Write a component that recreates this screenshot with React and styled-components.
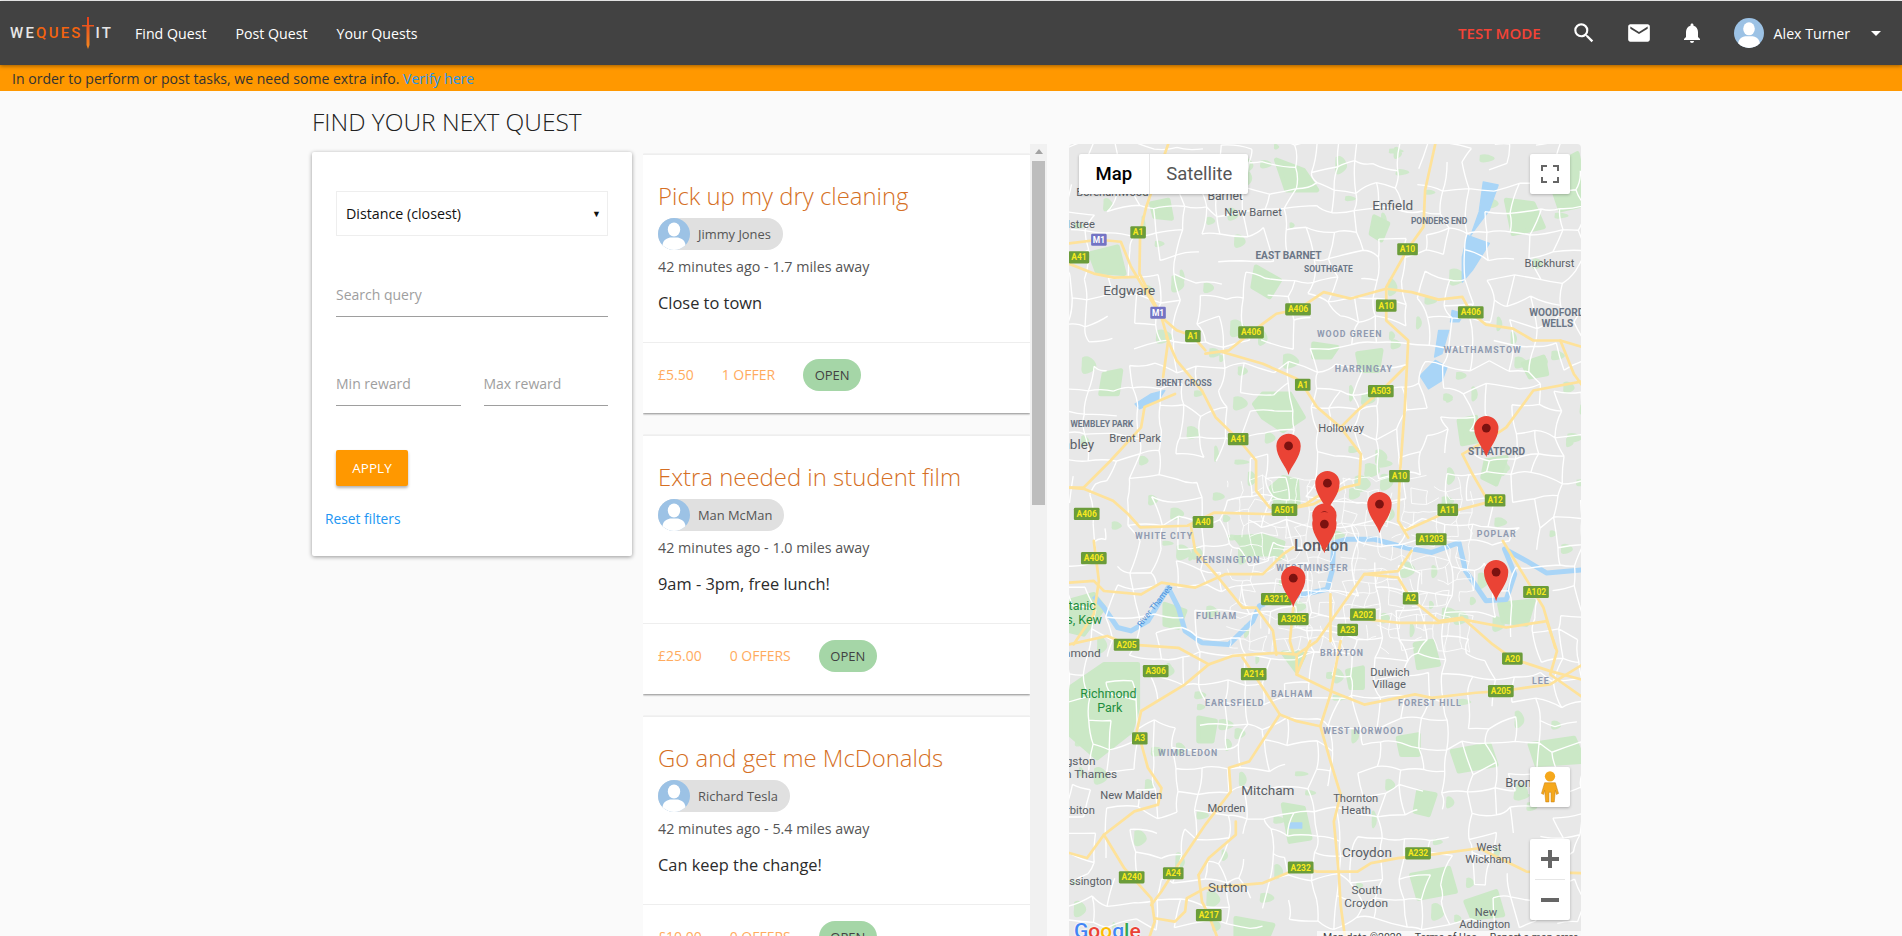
import React from 'react'
import styled, { createGlobalStyle } from 'styled-components'
import { MdSearch, MdEmail, MdNotifications, MdArrowDropDown } from 'react-icons/md'

const UI_FONT = `"Open Sans", "Noto Sans", sans-serif`

const GlobalStyle = createGlobalStyle`
  html, body {
    margin: 0;
    height: 936px;
    overflow: hidden;
    background: #fafafa;
    font-family: ${UI_FONT};
  }
  * { box-sizing: border-box; }
`

// quest data
const quests = [
  { id: 1, title: 'Pick up my dry cleaning', user: 'Jimmy Jones', dist: '1.7', text: 'Close to town', price: '£5.50', offers: '1 OFFER' },
  { id: 2, title: 'Extra needed in student film', user: 'Man McMan', dist: '1.0', text: '9am - 3pm, free lunch!', price: '£25.00', offers: '0 OFFERS' },
  { id: 3, title: 'Go and get me McDonalds', user: 'Richard Tesla', dist: '5.4', text: 'Can keep the change!', price: '£10.00', offers: '0 OFFERS' },
]

/* ---------- map data, in map sheet units (about 3 units = 1px) ---------- */

// sheet was measured a bit tall, squeeze y to line up
const sy = (y) => Math.round(y * 0.988)
const toPath = (pts) => 'M' + pts.map((p) => `${p[0]} ${sy(p[1])}`).join('L')

const majorRoads = [
  [[320,12],[255,200],[237,276],[235,400],[300,530],[345,570],[393,587],[430,630]],
  [[27,310],[115,299],[180,305],[210,380],[240,430],[300,530],[320,600],[305,710]],
  [[27,370],[100,400],[160,412],[230,410]],
  [[340,760],[250,800],[240,860],[150,960],[70,1040],[27,1040]],
  [[430,640],[500,630],[565,576],[640,520],[704,507],[780,455],[860,475],[965,445],[1040,455],[1120,478],[1190,470],[1215,516],[1260,553],[1340,565],[1400,600],[1480,600],[1563,625]],
  [[480,635],[600,670],[700,715],[718,733],[760,800],[830,860],[890,940],[885,1030],[840,1040],[750,1090],[664,1107],[620,1100],[580,1050],[580,960],[527,896],[460,830],[420,750],[345,660],[315,590]],
  [[1110,12],[1080,150],[1075,260],[1028,327],[965,440],[965,540],[1030,600],[1020,800],[1005,1006],[1000,1140],[1030,1190]],
  [[1020,680],[949,752],[880,810],[830,860]],
  [[1563,720],[1400,750],[1320,860],[1261,900],[1190,940],[1220,1000],[1260,1070],[1287,1079],[1130,1120],[1020,1170]],
  [[1480,600],[1520,700],[1563,760]],
  [[27,1040],[72,1045],[157,1080],[202,1120],[237,1160],[377,1155],[457,1115],[627,1120],[727,1090],[800,1040]],
  [[387,1155],[400,1230],[460,1300],[540,1400],[580,1400],[630,1470],[640,1540]],
  [[27,1325],[100,1320],[130,1350],[240,1360],[300,1325],[400,1340],[490,1300],[600,1300],[660,1240],[690,1220]],
  [[100,1200],[115,1320],[100,1420],[40,1510]],
  [[27,1510],[140,1485],[200,1510],[350,1520],[440,1570],[510,1545],[640,1535],[700,1540],[760,1500],[830,1400],[900,1300],[1000,1290],[1040,1230]],
  [[440,1570],[370,1630],[240,1710],[225,1780],[236,1792],[260,1880],[300,1940],[290,1990],[220,2010],[130,2080],[80,2150],[27,2135]],
  [[130,2080],[190,2180],[270,2270],[280,2340],[260,2400]],
  [[540,1550],[600,1640],[650,1720],[700,1740],[770,1755],[800,1860],[830,1960],[810,2040],[825,2200],[830,2290],[845,2400]],
  [[650,1720],[560,1860],[500,1880],[505,1950],[430,2050],[350,2170],[300,2250],[270,2290]],
  [[830,1500],[800,1660],[770,1755]],
  [[700,1600],[800,1650],[900,1690],[1050,1660],[1100,1670],[1230,1655],[1304,1650],[1450,1630],[1563,1560]],
  [[900,1300],[1000,1310],[1037,1372],[1120,1440],[1190,1430],[1280,1510],[1338,1553],[1450,1590],[1563,1620]],
  [[860,1430],[1000,1445],[1120,1445],[1190,1435],[1320,1460],[1440,1440],[1470,1530],[1450,1600],[1563,1680]],
  [[1310,1200],[1370,1300],[1430,1400],[1465,1520]],
  [[1563,2195],[1380,2190],[1240,2120],[1100,2140],[1000,2150],[920,2165],[880,2190],[760,2190],[712,2178],[600,2225],[430,2240],[375,2270],[370,2310],[340,2340],[280,2330]],
  [[410,2200],[420,2280],[440,2321],[470,2400]],
  [[520,2040],[520,2080],[440,2150],[410,2200]],
  [[690,1400],[680,1500],[690,1535]],
  [[800,1360],[800,1500]],
  [[700,1540],[700,1600],[740,1500]],
]

const parks = [
  [[625,1040],[660,1010],[700,1020],[705,1090],[640,1095]],
  [[600,760],[680,760],[720,830],[660,870],[600,830],[575,790]],
  [[30,1640],[130,1570],[230,1570],[230,1700],[210,1770],[110,1850],[30,1780]],
  [[30,1380],[100,1360],[130,1400],[70,1480],[30,1470]],
  [[520,1190],[600,1185],[660,1205],[650,1240],[560,1240]],
  [[660,1535],[725,1535],[700,1590]],
  [[310,1390],[370,1410],[350,1460],[310,1450]],
  [[90,340],[170,320],[190,400],[110,395]],
  [[270,190],[320,180],[330,235],[280,230]],
  [[130,700],[180,690],[170,760],[120,760]],
  [[640,60],[720,90],[760,150],[670,150]],
  [[580,380],[650,420],[620,470],[570,440]],
  [[930,230],[970,250],[950,300],[920,280]],
  [[1320,180],[1400,190],[1430,260],[1340,280]],
  [[1440,90],[1530,40],[1563,190],[1480,210]],
  [[1180,840],[1230,830],[1240,900],[1190,910]],
  [[1260,960],[1320,950],[1290,1030],[1250,1010]],
  [[1300,1390],[1400,1380],[1380,1450],[1310,1440]],
  [[1050,1510],[1100,1500],[1120,1570],[1060,1580]],
  [[850,1590],[895,1580],[895,1640],[860,1640]],
  [[1000,1790],[1060,1780],[1060,1840],[1010,1840]],
  [[1160,1830],[1270,1810],[1290,1870],[1180,1890]],
  [[1060,1950],[1110,1960],[1090,2020],[1050,2010]],
  [[660,1990],[720,2000],[740,2090],[680,2100]],
  [[1040,2200],[1150,2180],[1170,2250],[1060,2270]],
  [[1390,1810],[1520,1790],[1550,1860],[1410,1870]],
  [[1200,2280],[1290,2250],[1310,2320],[1220,2330]],
  [[520,2330],[630,2350],[610,2400],[520,2400]],
  [[410,1730],[460,1740],[450,1800],[410,1800]],
  [[880,640],[950,630],[940,690],[890,690]],
  [[750,610],[820,620],[800,650],[750,650]],
  [[1370,670],[1430,650],[1440,700],[1390,710]],
]

const waters = [
  [[1252,125],[1296,135],[1270,210],[1225,270],[1215,285],[1240,215]],
  [[1205,285],[1270,310],[1220,390],[1190,425],[1190,350]],
  [[1120,570],[1150,570],[1130,640],[1108,650]],
  [[1110,660],[1145,680],[1130,720],[1090,745],[1065,705]],
  [[222,790],[270,760],[310,750],[290,780],[235,805]],
  [[1160,510],[1195,520],[1180,545],[1155,545]],
  [[680,2045],[715,2045],[715,2060],[680,2060]],
]

const thames = [[100,1365],[130,1400],[170,1460],[210,1470],[260,1440],[320,1340],[350,1400],[370,1470],[420,1505],[500,1510],[570,1440],[590,1395],[640,1375],[700,1365],[790,1345],[805,1290],[810,1205],[850,1195],[930,1195],[1020,1220],[1100,1235],[1180,1205],[1200,1290],[1260,1380],[1320,1375],[1345,1300],[1315,1225],[1380,1260],[1440,1297],[1563,1285]]

const towns = [
  ['Borehamwood', 48, 168, 33], ['Barnet', 436, 178, 36], ['New Barnet', 486, 228, 33], ['Enfield', 924, 210, 40],
  ['Elstree', 3, 264, 33], ['Buckhurst', 1374, 382, 33], ['Edgware', 128, 464, 40], ['Brent Park', 146, 905, 33],
  ['Wembley', -62, 924, 40], ['Holloway', 764, 876, 33], ['Dulwich', 918, 1605, 33], ['Village', 924, 1641, 33],
  ['New Malden', 119, 1974, 33], ['Mitcham', 536, 1961, 40], ['Morden', 436, 2013, 33], ['Thornton', 808, 1982, 33],
  ['Heath', 832, 2018, 33], ['Bromley', 1317, 1936, 38], ['Croydon', 834, 2148, 40], ['West', 1232, 2130, 33],
  ['Wickham', 1199, 2166, 33], ['Sutton', 438, 2250, 40], ['South', 862, 2258, 35], ['Croydon', 841, 2296, 35],
  ['New', 1227, 2322, 33], ['Addington', 1181, 2358, 33], ['Richmond', -37, 1547, 35], ['Kingston', -33, 1871, 35],
  ['upon Thames', -44, 1911, 35], ['Surbiton', -20, 2018, 33], ['Chessington', -30, 2232, 33],
]

const suburbs = [
  ['PONDERS END', 1038, 252, 25], ['EAST BARNET', 578, 356, 30], ['SOUTHGATE', 722, 396, 25], ['WOODFORD', 1388, 527, 30],
  ['WELLS', 1424, 560, 30], ['BRENT CROSS', 284, 738, 25], ['WEMBLEY PARK', 31, 860, 25], ['STRATFORD', 1207, 942, 30],
]

const districts = [
  ['WOOD GREEN', 760, 590], ['WALTHAMSTOW', 1135, 638], ['HARRINGAY', 813, 695], ['WHITE CITY', 222, 1195], ['POPLAR', 1233, 1188],
  ['KENSINGTON', 402, 1267], ['WESTMINSTER', 640, 1291], ['FULHAM', 402, 1433], ['BRIXTON', 769, 1545], ['LEE', 1396, 1629],
  ['BALHAM', 624, 1667], ['EARLSFIELD', 429, 1695], ['FOREST HILL', 1000, 1695], ['WEST NORWOOD', 778, 1779], ['WIMBLEDON', 290, 1845],
]

const greenLabels = [
  ['Royal Botanic', -118, 1407], ['Gardens, Kew', -100, 1449], ['Richmond', 60, 1670], ['Park', 110, 1712],
]

const shields = [
  ['A1',231,276],['M1',115,299],['A41',56,351],['A10',1028,327],['M1',290,517],['A406',704,507],['A10',965,496],['A406',1215,516],
  ['A406',565,576],['A1',393,587],['A1',718,733],['A503',949,752],['A41',527,896],['A10',1004,1006],['A501',664,1107],['A11',1147,1107],
  ['A12',1287,1079],['A406',79,1119],['A40',423,1144],['A1203',1098,1195],['A406',100,1252],['A3212',640,1374],['A3205',690,1434],
  ['A2',1037,1372],['A102',1408,1353],['A202',896,1421],['A23',851,1467],['A205',197,1511],['A306',283,1590],['A214',573,1599],
  ['A20',1338,1553],['A205',1304,1650],['A3',236,1792],['A232',1059,2136],['A232',712,2178],['A24',335,2195],['A240',212,2207],['A217',440,2321],
]

const pins = [[676,916],[791,1027],[782,1124],[782,1150],[945,1090],[1261,862],[690,1312],[1290,1294]]

// little seeded random so the street mesh stays the same on every load
const seeded = (seed) => () => {
  seed = (seed * 1664525 + 1013904223) % 4294967296
  return seed / 4294967296
}

const buildMesh = (step, x0, y0, x1, y1, chance, seed) => {
  const rnd = seeded(seed)
  const nodes = []
  for (let y = y0; y <= y1; y += step) {
    const row = []
    for (let x = x0; x <= x1; x += step) {
      row.push([Math.round(x + (rnd() - 0.5) * step * 0.6), Math.round(y + (rnd() - 0.5) * step * 0.6)])
    }
    nodes.push(row)
  }
  const link = (a, b) => {
    const bend = step * 0.3
    const mx = Math.round((a[0] + b[0]) / 2 + (rnd() - 0.5) * bend)
    const my = Math.round((a[1] + b[1]) / 2 + (rnd() - 0.5) * bend)
    return `M${a[0]} ${a[1]}Q${mx} ${my} ${b[0]} ${b[1]}`
  }
  let d = ''
  nodes.forEach((row, r) => row.forEach((n, c) => {
    if (row[c + 1] && rnd() < chance) d += link(n, row[c + 1])
    if (nodes[r + 1] && rnd() < chance) d += link(n, nodes[r + 1][c])
  }))
  return d
}

const wideStreets = buildMesh(66, 20, 10, 1560, 2370, 0.66, 41)
const cityStreets = buildMesh(34, 500, 1000, 1220, 1540, 0.6, 7)

const patches = (() => {
  const rnd = seeded(99)
  return Array.from({ length: 170 }, () => {
    const x = 27 + rnd() * 1514
    const y = 12 + rnd() * 2343
    const w = 10 + rnd() * 30
    const h = 10 + rnd() * 26
    return `M${Math.round(x)} ${Math.round(y)}q${Math.round(w / 2)} ${Math.round(-h / 3)} ${Math.round(w)} ${Math.round(h / 4)}t${Math.round(-w / 3)} ${Math.round(h)}t${Math.round(-w * 0.7)} ${Math.round(-h / 2)}Z`
  }).join('')
})()

/* ---------- layout ---------- */

const Page = styled.div`
  height: 936px;
  overflow: hidden;
  padding-top: 1px;
  background: #fafafa;
`
const Nav = styled.nav`
  position: relative;
  z-index: 2;
  height: 64px;
  background: #424242;
  box-shadow: 0 1px 4px rgba(0, 0, 0, 0.4);
  display: flex;
  align-items: center;
  padding: 0 14px 0 10px;
  color: #fff;
  font-size: 14.2px;
`
const Logo = styled.div`
  width: 125px;
  display: flex;
  align-items: center;
  font-family: Roboto, sans-serif;
  font-weight: 500;
  font-size: 15px;
  letter-spacing: 2.2px;
  color: #e6e6e6;
  svg { margin: 0 2px 0 -1px; }
`
const LogoMark = styled.span`
  color: #f4640f;
`
const NavLink = styled.a`
  color: #fff;
  margin-right: 29px;
`
const Spacer = styled.div`
  flex: 1;
`
const TestMode = styled.span`
  color: #f44336;
  font-weight: 600;
  font-size: 15px;
  margin-right: 30px;
`
const NavIcon = styled.span`
  display: flex;
  margin-right: ${(p) => p.$gap}px;
  font-size: ${(p) => p.$size}px;
`
const UserName = styled.span`
  margin: 0 14px 0 10px;
`
const Banner = styled.div`
  height: 26px;
  background: #ff9800;
  padding-left: 12px;
  font-size: 14.05px;
  line-height: 27px;
  color: #333;
  a { color: #2196f3; }
`
const Content = styled.main`
  padding: 0 321px 0 312px;
`
const Heading = styled.h1`
  margin: 0;
  height: 53px;
  padding-top: 14px;
  font-size: 24.5px;
  line-height: 34px;
  font-weight: 300;
  color: #212121;
`
const Columns = styled.div`
  display: grid;
  grid-template-columns: 320px 404px 512px;
  column-gap: 11px;
  height: 792px;
  & > :last-child { margin-left: 11px; }
`

/* ---------- filter card ---------- */

const FilterCard = styled.section`
  align-self: start;
  height: 404px;
  margin-top: 8px;
  padding: 39px 24px 0;
  background: #fff;
  border-radius: 2px;
  box-shadow: 0 1px 4px rgba(0, 0, 0, 0.4);
`
const SelectBox = styled.div`
  height: 45px;
  border: 1px solid #eeeeee;
  display: flex;
  align-items: center;
  justify-content: space-between;
  padding: 0 6px 0 9px;
  font-size: 14.25px;
  color: #111;
  i { font-style: normal; font-size: 9px; }
`
const Field = styled.div`
  flex: 1;
  height: 44px;
  margin-top: ${(p) => p.$top}px;
  border-bottom: 1px solid #9e9e9e;
  font-size: 14px;
  line-height: 44px;
  color: #9e9e9e;
`
const FieldRow = styled.div`
  display: flex;
  gap: 23px;
`
const ApplyButton = styled.button`
  display: block;
  width: 72px;
  height: 36px;
  margin-top: 44px;
  border: 0;
  border-radius: 2px;
  background: #ff9800;
  color: #fff;
  font-family: inherit;
  font-size: 13.5px;
  box-shadow: 0 2px 3px rgba(0, 0, 0, 0.3);
`
const ResetLink = styled.a`
  display: block;
  margin: 23px 0 0 -11px;
  font-size: 13.8px;
  color: #2196f3;
`

/* ---------- quest list ---------- */

const ListArea = styled.section`
  display: flex;
  height: 792px;
  overflow: hidden;
`
const Cards = styled.div`
  flex: 1;
  padding-top: 10px;
  min-width: 0;
`
const Card = styled.article`
  height: 259px;
  margin-bottom: 22px;
  background: #fff;
  border-top: 1px solid #eeeeee;
  box-shadow: 0 1px 2px rgba(0, 0, 0, 0.45);
`
const CardBody = styled.div`
  height: 187px;
  padding: 24px 15px 0;
`
const CardTitle = styled.h2`
  margin: 0;
  height: 39px;
  font-size: 23.9px;
  line-height: 34px;
  font-weight: 300;
  color: #d56f24;
`
const UserChip = styled.div`
  display: inline-flex;
  align-items: center;
  height: 32px;
  background: #e0e0e0;
  border-radius: 16px;
  padding-right: 12px;
  font-size: 12.9px;
  font-weight: 500;
  color: #555;
  span { margin-left: 8px; }
`
const Meta = styled.div`
  margin-top: 1px;
  font-size: 14.3px;
  line-height: 22px;
  color: #555;
`
const Desc = styled.div`
  margin-top: 14px;
  font-size: 16.4px;
  line-height: 22px;
  color: #2b2b2b;
`
const CardFoot = styled.div`
  height: 71px;
  border-top: 1px solid #eeeeee;
  padding: 16px 15px 0;
  display: flex;
  align-items: flex-start;
  font-size: 14px;
  line-height: 32px;
  color: #ffab5e;
`
const FootItem = styled.span`
  margin-right: 28px;
`
const StatusChip = styled.span`
  width: 58px;
  height: 32px;
  border-radius: 16px;
  background: #a5d6a7;
  text-align: center;
  font-size: 13px;
  color: #424242;
`
const ScrollTrack = styled.div`
  width: 17px;
  flex: none;
  background: #f1f1f1;
  padding: 5px 2px 0;
  &::before {
    content: '';
    display: block;
    width: 0;
    margin: 0 auto 7px;
    border: 4px solid transparent;
    border-top: 0;
    border-bottom: 5px solid #a3a3a3;
  }
`
const ScrollThumb = styled.div`
  height: 344px;
  background: #bdbdbd;
`

/* ---------- map ---------- */

const MapWrap = styled.section`
  position: relative;
  width: 512px;
  height: 792px;
  overflow: hidden;
  border-radius: 4px 4px 0 0;
  background: #e8e8e8;
  font-family: Roboto, sans-serif;
  & > svg { display: block; }
`
const TownText = styled.text`
  font-family: Roboto, sans-serif;
  fill: #5a5f66;
`
const SuburbText = styled.text`
  font-family: Roboto, sans-serif;
  font-weight: 700;
  fill: #6b7686;
`
const DistrictText = styled.text`
  font-family: Roboto, sans-serif;
  font-weight: 700;
  font-size: 26px;
  letter-spacing: 3px;
  fill: #8f9ab0;
`
const ParkText = styled.text`
  font-family: Roboto, sans-serif;
  font-size: 37px;
  fill: #1e8e3e;
`
const RiverText = styled.text`
  font-family: Roboto, sans-serif;
  font-size: 25px;
  fill: #4a8fd8;
`
const ShieldText = styled.text`
  font-family: Roboto, sans-serif;
  font-size: 25px;
  font-weight: 700;
  text-anchor: middle;
  fill: ${(p) => (p.$motorway ? '#fff' : '#f7e91f')};
`
const MapControl = styled.div`
  position: absolute;
  left: ${(p) => p.$left}px;
  top: ${(p) => p.$top}px;
  width: ${(p) => p.$width || 40}px;
  height: ${(p) => p.$height || 40}px;
  background: #fff;
  border-radius: 2px;
  box-shadow: 0 1px 3px rgba(0, 0, 0, 0.25);
  display: flex;
  align-items: center;
  justify-content: center;
`
const MapTab = styled.div`
  height: 40px;
  line-height: 40px;
  padding: 0 ${(p) => (p.$active ? 17 : 16)}px;
  font-size: 18.5px;
  color: ${(p) => (p.$active ? '#000' : '#565656')};
  font-weight: ${(p) => (p.$active ? 500 : 400)};
  & + & { border-left: 1px solid #e6e6e6; }
`
const ZoomStack = styled.div`
  display: flex;
  flex-direction: column;
  align-items: center;
  hr {
    width: 30px;
    margin: 0;
    border: 0;
    border-top: 1px solid #e6e6e6;
  }
`
const GoogleMark = styled.div`
  position: absolute;
  left: 5px;
  top: 775px;
  font-family: Roboto, sans-serif;
  font-size: 21px;
  font-weight: 500;
  line-height: 24px;
  text-shadow: 0 0 2px #fff, 0 0 2px #fff;
`
const GoogleLetter = styled.span`
  color: ${(p) => p.$color};
`
const Attribution = styled.div`
  position: absolute;
  right: 0;
  top: 787px;
  width: 264px;
  height: 20px;
  padding-left: 6px;
  white-space: nowrap;
  overflow: hidden;
  background: rgba(255, 255, 255, 0.7);
  font-size: 10.5px;
  line-height: 14px;
  color: #444;
  span { margin-right: 13px; }
`

const Avatar = ({ size }) => (
  <svg width={size} height={size} viewBox="0 0 32 32" style={{ flex: 'none' }}>
    <defs>
      <clipPath id="avatar-clip"><circle cx="16" cy="16" r="16" /></clipPath>
    </defs>
    <g clipPath="url(#avatar-clip)">
      <rect width="32" height="32" fill="#9cc2e5" />
      <ellipse cx="16" cy="11.500" rx="6.200" ry="7" fill="#fff" />
      <path d="M4 32c0-8 2-11 8-12.500h8c6 1.500 8 4.500 8 12.500z" fill="#fff" />
    </g>
  </svg>
)

const SwordLogo = () => (
  <svg width="12" height="32" viewBox="0 0 12 32">
    <defs>
      <linearGradient id="blade" x1="0" y1="0" x2="0" y2="1">
        <stop offset="0" stopColor="#e8401c" />
        <stop offset="1" stopColor="#f58a1f" />
      </linearGradient>
    </defs>
    <path d="M5 0h2v8h5v1.500H7.500V28L6 32l-1.500-4V9.500H0V8h5z" fill="url(#blade)" />
  </svg>
)

const CityMap = () => (
  <svg width="512" height="792" viewBox="26.600 11.800 1514.500 2342.700">
    <path d={patches} fill="#cfe9cb" />
    {parks.map((p, i) => <path key={i} d={toPath(p) + 'Z'} fill="#cbe8c6" stroke="#cbe8c6" strokeWidth="14" strokeLinejoin="round" />)}
    {waters.map((w, i) => <path key={i} d={toPath(w) + 'Z'} fill="#a9d5f7" stroke="#a9d5f7" strokeWidth="4" strokeLinejoin="round" />)}
    <path d={toPath(thames)} fill="none" stroke="#a9d5f7" strokeWidth="15" strokeLinejoin="round" />
    <path d={cityStreets} fill="none" stroke="#fff" strokeWidth="2.500" />
    <path d={wideStreets} fill="none" stroke="#fff" strokeWidth="4" />
    {majorRoads.map((r, i) => <path key={i} d={toPath(r)} fill="none" stroke="#fee29a" strokeWidth="8" strokeLinejoin="round" strokeLinecap="round" />)}
    {towns.map(([t, x, y, s], i) => <TownText key={i} x={x} y={sy(y)} fontSize={s}>{t}</TownText>)}
    {suburbs.map(([t, x, y, s]) => <SuburbText key={t} x={x} y={sy(y)} fontSize={s}>{t}</SuburbText>)}
    {districts.map(([t, x, y]) => <DistrictText key={t} x={x} y={sy(y)}>{t}</DistrictText>)}
    {greenLabels.map(([t, x, y]) => <ParkText key={t} x={x} y={sy(y)}>{t}</ParkText>)}
    <RiverText transform={`translate(240 ${sy(1460)}) rotate(-52)`}>River Thames</RiverText>
    <TownText x="692" y={sy(1232)} fontSize="48" fontWeight="500">London</TownText>
    {shields.map(([t, cx, cy], i) => {
      const w = t.length * 15 + 16
      const motorway = t[0] === 'M'
      return (
        <g key={i}>
          <rect x={cx - w / 2} y={sy(cy) - 18} width={w} height="36" rx="4" fill={motorway ? '#7373c4' : '#6b9c3a'} />
          <ShieldText x={cx} y={sy(cy) + 9} $motorway={motorway}>{t}</ShieldText>
        </g>
      )
    })}
    {pins.map(([x, y], i) => (
      <g key={i} transform={`translate(${x} ${sy(y)})`}>
        <path d="M0 86C-6 60-36 35-36 0A36 36 0 1 1 36 0C36 35 6 60 0 86Z" fill="#ea4335" />
        <circle r="13" fill="#7b1210" />
      </g>
    ))}
  </svg>
)

const App = () => (
  <Page>
    <GlobalStyle />
    <Nav>
      <Logo>WE<LogoMark>QUES</LogoMark><SwordLogo />IT</Logo>
      <NavLink>Find Quest</NavLink>
      <NavLink>Post Quest</NavLink>
      <NavLink>Your Quests</NavLink>
      <Spacer />
      <TestMode>TEST MODE</TestMode>
      <NavIcon $size={26} $gap={29}><MdSearch /></NavIcon>
      <NavIcon $size={26} $gap={28}><MdEmail /></NavIcon>
      <NavIcon $size={24} $gap={30}><MdNotifications /></NavIcon>
      <Avatar size={30} />
      <UserName>Alex Turner</UserName>
      <NavIcon $size={24} $gap={0}><MdArrowDropDown /></NavIcon>
    </Nav>
    <Banner>In order to perform or post tasks, we need some extra info. <a>Verify here</a></Banner>
    <Content>
      <Heading>FIND YOUR NEXT QUEST</Heading>
      <Columns>
        <FilterCard>
          <SelectBox>Distance (closest)<i>▼</i></SelectBox>
          <Field $top={37}>Search query</Field>
          <FieldRow>
            <Field $top={45}>Min reward</Field>
            <Field $top={45}>Max reward</Field>
          </FieldRow>
          <ApplyButton>APPLY</ApplyButton>
          <ResetLink>Reset filters</ResetLink>
        </FilterCard>
        <ListArea>
          <Cards>
            {quests.map((q) => (
              <Card key={q.id}>
                <CardBody>
                  <CardTitle>{q.title}</CardTitle>
                  <UserChip><Avatar size={32} /><span>{q.user}</span></UserChip>
                  <Meta>42 minutes ago - {q.dist} miles away</Meta>
                  <Desc>{q.text}</Desc>
                </CardBody>
                <CardFoot>
                  <FootItem>{q.price}</FootItem>
                  <FootItem>{q.offers}</FootItem>
                  <StatusChip>OPEN</StatusChip>
                </CardFoot>
              </Card>
            ))}
          </Cards>
          <ScrollTrack><ScrollThumb /></ScrollTrack>
        </ListArea>
        <MapWrap>
          <CityMap />
          <MapControl $left={10} $top={10} $width={169}>
            <MapTab $active>Map</MapTab>
            <MapTab>Satellite</MapTab>
          </MapControl>
          <MapControl $left={461} $top={10}>
            <svg width="18" height="18" viewBox="0 0 18 18" fill="none" stroke="#666" strokeWidth="2">
              <path d="M1 6V1h5M12 1h5v5M17 12v5h-5M6 17H1v-5" />
            </svg>
          </MapControl>
          <MapControl $left={461} $top={623}>
            <svg width="20" height="32" viewBox="0 0 18 30">
              <circle cx="9" cy="5" r="4.800" fill="#f5a81c" />
              <path d="M4 11h10l3 10-2 1-1-4-1 11H10V20H8v9H5L4 18l-1 4-2-1z" fill="#f5a81c" stroke="#c77f10" strokeWidth=".5" />
            </svg>
          </MapControl>
          <MapControl $left={461} $top={695} $height={81}>
            <ZoomStack>
              <svg width="40" height="40" viewBox="0 0 40 40"><path d="M18 11h4v7h7v4h-7v7h-4v-7h-7v-4h7z" fill="#666" /></svg>
              <hr />
              <svg width="40" height="40" viewBox="0 0 40 40"><path d="M11 18h18v4H11z" fill="#666" /></svg>
            </ZoomStack>
          </MapControl>
          <GoogleMark>
            <GoogleLetter $color="#4285f4">G</GoogleLetter>
            <GoogleLetter $color="#ea4335">o</GoogleLetter>
            <GoogleLetter $color="#fbbc05">o</GoogleLetter>
            <GoogleLetter $color="#4285f4">g</GoogleLetter>
            <GoogleLetter $color="#34a853">l</GoogleLetter>
            <GoogleLetter $color="#ea4335">e</GoogleLetter>
          </GoogleMark>
          <Attribution><span>Map data ©2020</span><span>Terms of Use</span><span>Report a map error</span></Attribution>
        </MapWrap>
      </Columns>
    </Content>
  </Page>
)

export default App
